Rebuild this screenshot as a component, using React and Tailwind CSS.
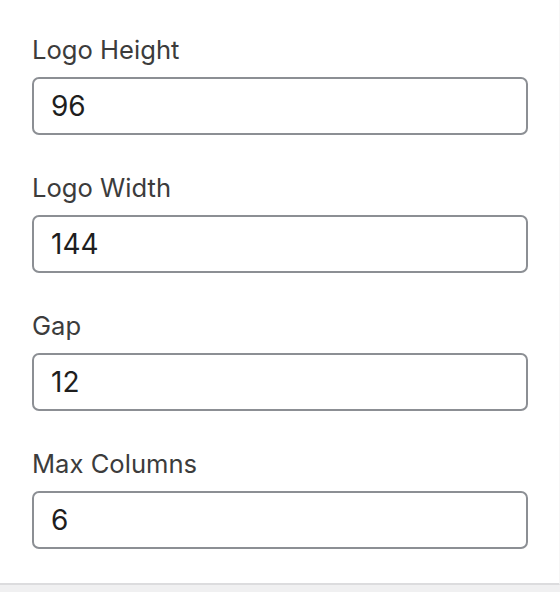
import { useState } from 'react';

const fields = [
  { label: 'Logo Height', value: '96' },
  { label: 'Logo Width', value: '144' },
  { label: 'Gap', value: '12' },
  { label: 'Max Columns', value: '6' },
];

function Field({ label, value }) {
  const [val, setVal] = useState(value);
  return (
    <div className="mb-[37px] last:mb-[34px]">
      <label className="block h-[32px] leading-[32px] text-[25.6px] text-[#3c3c3c] mb-[11px]">
        {label}
      </label>
      <input
        type="text"
        value={val}
        onChange={(e) => setVal(e.target.value)}
        className="block w-[496px] h-[58px] border-2 border-[#8c8f94] rounded-[7px] pl-[17px] text-[28px] text-[#1e1e1e] bg-white outline-none"
      />
    </div>
  );
}

export default function App() {
  return (
    <div
      className="w-[560px] h-[592px] bg-white flex flex-col overflow-hidden"
      style={{ fontFamily: 'Inter, "Noto Sans", sans-serif' }}
    >
      <div className="pt-[34px] pl-[32px] border-r border-[#f6f6f6] border-b-2 border-b-[#dcdcde]">
        {fields.map((f) => (
          <Field key={f.label} label={f.label} value={f.value} />
        ))}
      </div>
      <div className="flex-1 bg-[#f0f0f1]" />
    </div>
  );
}
